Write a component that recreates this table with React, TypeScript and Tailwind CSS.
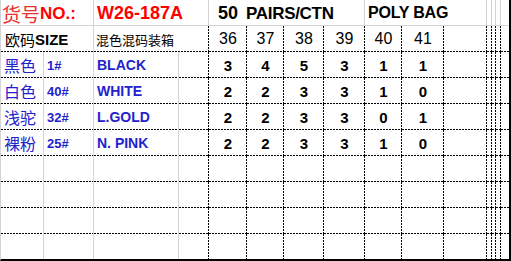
import React from "react";

const RG_BG =
  "[background:linear-gradient(#d4d4d4,#d4d4d4)_right_top/1px_100%_no-repeat,linear-gradient(#d4d4d4,#d4d4d4)_left_bottom/100%_1px_no-repeat]";
const BG = "[background:linear-gradient(#d4d4d4,#d4d4d4)_left_bottom/100%_1px_no-repeat]";
const RG_BD =
  "[background:linear-gradient(#d4d4d4,#d4d4d4)_right_top/1px_100%_no-repeat,repeating-linear-gradient(to_right,#000_0_2px,transparent_2px_3px)_left_bottom/100%_1px_no-repeat]";
const RD_BD =
  "[background:repeating-linear-gradient(to_bottom,#000_0_2px,transparent_2px_3px)_right_top/1px_100%_no-repeat,repeating-linear-gradient(to_right,#000_0_2px,transparent_2px_3px)_left_bottom/100%_1px_no-repeat]";
const BD = "[background:repeating-linear-gradient(to_right,#000_0_2px,transparent_2px_3px)_left_bottom/100%_1px_no-repeat]";
const RG = "[background:linear-gradient(#d4d4d4,#d4d4d4)_right_top/1px_100%_no-repeat]";
const RD = "[background:repeating-linear-gradient(to_bottom,#000_0_2px,transparent_2px_3px)_right_top/1px_100%_no-repeat]";

const FONT = "font-['Liberation_Sans','Noto_Sans_CJK_SC',sans-serif]";
const CJK = "font-['Noto_Sans_CJK_SC','Liberation_Sans',sans-serif]";

type CellProps = {
  className?: string;
  children?: React.ReactNode;
};

function Cell({ className = "", children }: CellProps) {
  return <div className={`flex items-center overflow-visible whitespace-nowrap ${className}`}>{children}</div>;
}

const items: [string, string, string, number[]][] = [
  ["黑色", "1#", "BLACK", [3, 4, 5, 3, 1, 1]],
  ["白色", "40#", "WHITE", [2, 2, 3, 3, 1, 0]],
  ["浅驼", "32#", "L.GOLD", [2, 2, 3, 3, 0, 1]],
  ["裸粉", "25#", "N. PINK", [2, 2, 3, 3, 1, 0]],
];

const sizes = [36, 37, 38, 39, 40, 41];

function DataRow({ item }: { item: [string, string, string, number[]] }) {
  const [cn, code, en, qty] = item;
  return (
    <>
      <Cell className={`${RG_BD} pl-[3px] text-[16px] text-[#2222cc] ${CJK}`}>{cn}</Cell>
      <Cell className={`${RG_BD} pl-[3px] text-[13px] font-bold text-[#2222cc]`}>{code}</Cell>
      <Cell className={`${RG_BD} pl-[3px] text-[14px] font-bold text-[#2222cc]`}>{en}</Cell>
      <Cell className={RD_BD} />
      {qty.map((q, i) => (
        <Cell key={i} className={`${RD_BD} justify-center text-[15px] font-bold text-black`}>
          {q}
        </Cell>
      ))}
      <Cell className={RD_BD} />
      <Cell className={RD_BD} />
      <Cell className={RD_BD} />
      <Cell className={RD_BD} />
      <Cell className={BD} />
    </>
  );
}

function EmptyRow({ last }: { last?: boolean }) {
  if (last) {
    return (
      <>
        <Cell className={RG} />
        <Cell className={RG} />
        <Cell className={RG} />
        {Array.from({ length: 11 }).map((_, i) => (
          <Cell key={i} className={RD} />
        ))}
        <Cell />
      </>
    );
  }
  return (
    <>
      <Cell className={RG_BD} />
      <Cell className={RG_BD} />
      <Cell className={RG_BD} />
      {Array.from({ length: 11 }).map((_, i) => (
        <Cell key={i} className={RD_BD} />
      ))}
      <Cell className={BD} />
    </>
  );
}

export default function App() {
  return (
    <div className="bg-white">
      <div
        className={`grid w-[511px] grid-cols-[43px_50px_85px_30px_38px_37px_40px_41px_37px_42px_43px_5px_4px_5px_8px] grid-rows-[26px_26px_26px_26px_26px_26px_26px_26px_26px_25px] border-l border-l-[#d4d4d4] border-r-2 border-r-black border-b-2 border-b-black bg-white leading-none text-black ${FONT}`}
      >
        {/* Row 1 */}
        <Cell className={`col-span-2 ${RG_BG} pl-[1px]`}>
          <span className={`text-[19px] text-[#e8302f] ${CJK}`}>货号</span>
          <span className="text-[17px] font-bold text-[#ff0000]">NO.:</span>
        </Cell>
        <Cell className={`col-span-2 ${RG_BG} pl-[3px] text-[18px] font-bold text-[#ff0000]`}>W26-187A</Cell>
        <Cell className={`${BG} justify-center text-[18px] font-bold`}>50</Cell>
        <Cell className={`col-span-3 ${RG_BG} ml-[-1px] text-[17px] font-bold tracking-[-0.3px]`}>PAIRS/CTN</Cell>
        <Cell className={`col-span-3 ${RG_BG} pl-[3px] text-[16px] font-bold tracking-[-0.2px]`}>POLY BAG</Cell>
        <Cell className={RG_BG} />
        <Cell className={RG_BG} />
        <Cell className={RG_BG} />
        <Cell className={BG} />

        {/* Row 2 */}
        <Cell className={`col-span-2 ${RG_BD} pl-[4px]`}>
          <span className={`text-[15px] ${CJK}`}>欧码</span>
          <span className="text-[15px] font-bold">SIZE</span>
        </Cell>
        <Cell className={`col-span-2 ${RD_BD} pl-[2px] text-[13px] ${CJK}`}>混色混码装箱</Cell>
        {sizes.map((s) => (
          <Cell key={s} className={`${RD_BD} justify-center text-[16px]`}>
            {s}
          </Cell>
        ))}
        <Cell className={RD_BD} />
        <Cell className={RD_BD} />
        <Cell className={RD_BD} />
        <Cell className={RD_BD} />
        <Cell className={BD} />

        {items.map((it, i) => (
          <DataRow key={i} item={it} />
        ))}

        <EmptyRow />
        <EmptyRow />
        <EmptyRow />
        <EmptyRow last />
      </div>
    </div>
  );
}
